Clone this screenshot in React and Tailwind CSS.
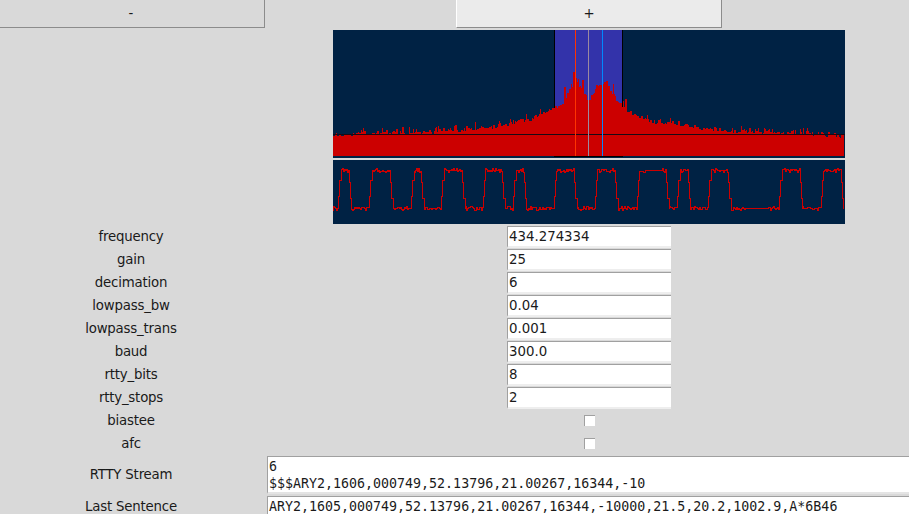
import React from 'react'

// small seeded generator so the noisy traces stay the same every render
function makeRand(seed) {
  let s = seed
  return () => {
    s = (s * 16807) % 2147483647
    return s / 2147483647
  }
}

// [x, y of the spectrum's top edge], page coordinates
const envelope = [
  [333, 133], [380, 131], [433, 130], [470, 127], [500, 124], [533, 117], [553, 107], [562, 103],
  [568, 92], [575, 78], [581, 87], [585, 92], [589, 105], [593, 92], [600, 82], [607, 80],
  [612, 93], [618, 100], [625, 109], [637, 114], [657, 121], [690, 125], [723, 129], [757, 130],
  [790, 131], [823, 133], [844, 134],
]

function envelopeAt(x) {
  for (let i = 0; i < envelope.length - 1; i++) {
    const [x0, y0] = envelope[i]
    const [x1, y1] = envelope[i + 1]
    if (x >= x0 && x <= x1) return y0 + ((y1 - y0) * (x - x0)) / (x1 - x0)
  }
  return 134
}

function spectrumPath() {
  const rand = makeRand(4711)
  let d = 'M0 126'
  for (let x = 333; x < 844; x++) {
    const r = rand()
    const spike = r * r * r * (x > 550 && x < 630 ? 14 : 6)
    const top = Math.round(envelopeAt(x) + 1 + rand() * 3 - spike) - 30
    d += `V${top}H${x - 332}`
    // the capture's bars are often two pixels wide
    if (rand() > 0.55 && x < 843) {
      x++
      d += `H${x - 332}`
    }
  }
  return d + 'V126Z'
}

// square wave edges: [rise start, high from, fall start, low from]
const pulses = [
  [338, 341, 349, 351], [369, 372, 390, 393], [411, 414, 421, 424], [441, 444, 462, 465],
  [483, 485, 502, 505], [513, 516, 524, 526], [554, 556, 574, 577], [595, 597, 615, 618],
  [637, 639, 666, 669], [677, 680, 688, 690], [708, 711, 728, 731], [779, 782, 800, 802],
  [821, 823, 841, 843],
]
// stretches that come out clean in the capture
const quietLow = [745, 768]
const quietHigh = [645, 662]

function wavePath() {
  const rand = makeRand(1234)
  const low = 48.5
  const high = 10.5
  let d = `M0 ${low + 2}`
  let x = 333
  const noise = (base, quiet) => (quiet ? base : base + Math.round(rand() * 4 - 2))
  for (const [riseA, riseB, fallA, fallB] of pulses) {
    for (; x < riseA; x++) {
      d += `H${x - 333 + 0.5}V${noise(low, x > quietLow[0] && x < quietLow[1])}`
    }
    d += `H${riseA - 333 + 0.5}V${low - 12}H${riseA - 332 + 0.5}V${high + 10}H${riseB - 333 + 0.5}V${high}`
    x = riseB
    for (; x < fallA; x++) {
      d += `H${x - 333 + 0.5}V${noise(high, x > quietHigh[0] && x < quietHigh[1])}`
    }
    d += `H${fallA - 333 + 0.5}V${high + 12}H${fallA - 332 + 0.5}V${low - 10}H${fallB - 333 + 0.5}V${low}`
    x = fallB
  }
  return d
}

const fields = [
  ['frequency', '434.274334'],
  ['gain', '25'],
  ['decimation', '6'],
  ['lowpass_bw', '0.04'],
  ['lowpass_trans', '0.001'],
  ['baud', '300.0'],
  ['rtty_bits', '8'],
  ['rtty_stops', '2'],
]

function Row({ label, children }) {
  return (
    <div className="flex items-center h-[23px]">
      <div className="w-[262px] text-center tracking-[-0.2px] shrink-0">{label}</div>
      {children}
    </div>
  )
}

function Check() {
  return <div className="ml-[322px] mb-px w-[11px] h-[11px] bg-white border-l border-t border-[#a0a0a0]" />
}

export default function App() {
  return (
    <div
      className="w-[909px] h-[514px] overflow-hidden bg-[#d9d9d9] text-[13.33px] text-[#1a1a1a]"
      style={{ fontFamily: '"DejaVu Sans", sans-serif' }}
    >
      {/* Buttons */}
      <div className="flex h-[28px]">
        <div className="-ml-[2px] w-[267px] h-[28px] flex items-center justify-center bg-[#d9d9d9] border-r border-b border-[#8c8c8c]">-</div>
        <div className="ml-[191px] w-[266px] h-[28px] flex items-center justify-center bg-[#ebebeb] border-l border-white border-r border-b border-r-[#8c8c8c] border-b-[#8c8c8c]">+</div>
      </div>

      {/* Plots */}
      <div className="ml-[333px] w-[512px] mt-[2px]">
        <svg width="512" height="128" className="block bg-[#002244]" shapeRendering="crispEdges">
          <rect x="221" y="0" width="68" height="126" fill="#3333aa" />
          <rect x="221" y="0" width="1" height="127" fill="#000" />
          <rect x="289" y="0" width="1" height="127" fill="#000" />
          <path d={spectrumPath()} fill="#cc0000" />
          <rect x="221" y="126" width="69" height="1" fill="#000" />
          <rect x="0" y="104" width="512" height="1" fill="#1a0a14" />
          <rect x="242" y="0" width="1" height="126" fill="#ff3300" />
          <rect x="255" y="0" width="1" height="126" fill="#9a8aa0" />
          <rect x="269" y="0" width="1" height="126" fill="#0088ff" />
        </svg>
        <div className="h-[2px]" />
        <svg width="512" height="64" className="block bg-[#002244]" shapeRendering="crispEdges">
          <path d={wavePath()} fill="none" stroke="#cc0000" strokeWidth="1" />
        </svg>
      </div>

      {/* Parameters */}
      <div className="mt-[1px]">
        {fields.map(([label, value]) => (
          <Row key={label} label={label}>
            <div className="ml-[245px] w-[164px] h-[22px] pl-[1px] leading-[20px] bg-white border-l border-t border-b-2 border-[#a0a0a0] border-b-[#eeeeee]">{value}</div>
          </Row>
        ))}
        <Row label="biastee"><Check /></Row>
        <Row label="afc"><Check /></Row>
      </div>

      {/* Telemetry output */}
      <div className="mt-[1px] flex">
        <div className="w-[262px] shrink-0 h-[38px] flex items-center justify-center tracking-[-0.2px]">RTTY Stream</div>
        <div
          className="ml-[5px] flex-1 h-[38px] pl-[1px] pt-[1px] leading-[17px] text-[13.3px] bg-white border-l border-t border-b-2 border-[#a0a0a0] border-b-[#e4e4e4]"
          style={{ fontFamily: '"DejaVu Sans Mono", monospace' }}
        >
          <div>6</div>
          <div>$$$ARY2,1606,000749,52.13796,21.00267,16344,-10</div>
        </div>
      </div>
      <div className="mt-[2px] flex">
        <div className="w-[262px] shrink-0 h-[20px] pt-[2px] flex items-center justify-center tracking-[-0.2px]">Last Sentence</div>
        <div
          className="ml-[5px] flex-1 h-[20px] pl-[1px] leading-[20px] text-[13.3px] bg-white border-l border-t border-[#a0a0a0]"
          style={{ fontFamily: '"DejaVu Sans Mono", monospace' }}
        >
          ARY2,1605,000749,52.13796,21.00267,16344,-10000,21.5,20.2,1002.9,A*6B46
        </div>
      </div>
    </div>
  )
}
